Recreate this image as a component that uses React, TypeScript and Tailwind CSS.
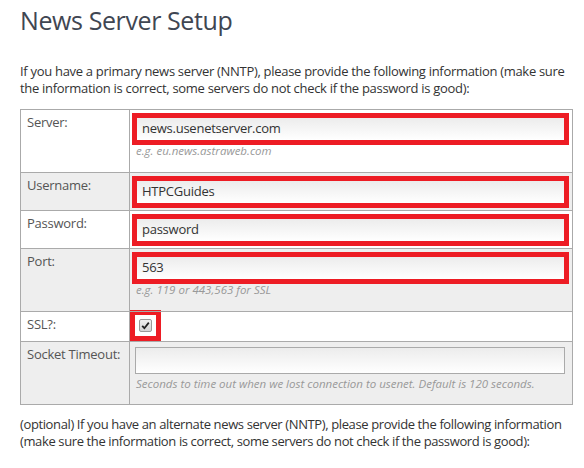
import React from 'react';

const font = { fontFamily: '"Open Sans", "Noto Sans", sans-serif' };

function RedInput({ value }: { value: string }) {
  return (
    <div className="-ml-[3px] w-[437px] h-[32px] border-[5px] border-[#ed1c24] bg-gradient-to-b from-[#ececec] to-white flex items-center pl-[5px] text-[13px] tracking-[-0.25px] text-[#333]">
      {value}
    </div>
  );
}

function Hint({ children, tight }: { children: React.ReactNode; tight?: boolean }) {
  return (
    <div className={`italic text-[11.5px] leading-[14px] text-[#999] pl-[1px] whitespace-nowrap ${tight ? '-mt-[1px]' : 'mt-[3px]'}`}>
      {children}
    </div>
  );
}

function Label({ children }: { children: React.ReactNode }) {
  return (
    <td className="border border-[#aaaaaa] align-top px-[6px] pt-[4px] text-[13px] leading-[17px] tracking-[-0.25px] text-[#555] whitespace-nowrap">
      {children}
    </td>
  );
}

function Row({ label, shade, h, children }: { label: string; shade?: boolean; h: string; children: React.ReactNode }) {
  return (
    <tr className={`${h} ${shade ? 'bg-[#eeeeee]' : 'bg-white'}`}>
      <Label>{label}</Label>
      <td className="border border-[#aaaaaa] align-top px-[5px] pt-[3px]">{children}</td>
    </tr>
  );
}

export default function App() {
  return (
    <div className="w-[584px] h-[468px] overflow-hidden bg-white px-5" style={font}>
      <h1 className="text-[25px] leading-[32px] tracking-[-0.4px] text-[#3f4652] pt-[4px]">News Server Setup</h1>
      <p className="mt-[27px] text-[13px] leading-[17px] tracking-[-0.3px] text-[#333] w-[553px]">
        If you have a primary news server (NNTP), please provide the following information (make sure the information is correct, some servers do not check if the password is good):
      </p>
      <table className="mt-[12px] w-[553px] table-fixed border-collapse border border-[#aaaaaa]">
        <colgroup>
          <col className="w-[109px]" />
          <col />
        </colgroup>
        <tbody>
          <Row label="Server:" h="h-[63px]">
            <RedInput value="news.usenetserver.com" />
            <Hint tight>e.g. eu.news.astraweb.com</Hint>
          </Row>
          <Row label="Username:" shade h="h-[38px]">
            <RedInput value="HTPCGuides" />
          </Row>
          <Row label="Password:" h="h-[38px]">
            <RedInput value="password" />
          </Row>
          <Row label="Port:" shade h="h-[63px]">
            <RedInput value="563" />
            <Hint tight>e.g. 119 or 443,563 for SSL</Hint>
          </Row>
          <tr className="h-[30px] bg-white">
            <Label>SSL?:</Label>
            <td className="border border-[#aaaaaa] align-top p-0">
              <div className="w-[31px] h-[31px] -mt-[2px] border-[5px] border-[#ed1c24] flex items-center justify-center bg-white">
                <div className="w-[13px] h-[13px] rounded-[2px] border border-[#9a9a9a] bg-gradient-to-b from-[#f0f0f0] to-[#d4d4d4] flex items-center justify-center">
                  <svg width="9" height="9" viewBox="0 0 9 9">
                    <path d="M1.2 4.8 L3.4 7.2 L7.8 1.6" stroke="#222" strokeWidth="1.8" fill="none" />
                  </svg>
                </div>
              </div>
            </td>
          </tr>
          <Row label="Socket Timeout:" shade h="h-[63px]">
            <div className="w-[430px] h-[27px] mt-[2px] border border-[#aaaaaa] bg-gradient-to-b from-[#ececec] to-white" />
            <Hint>Seconds to time out when we lost connection to usenet. Default is 120 seconds.</Hint>
          </Row>
        </tbody>
      </table>
      <p className="mt-[11px] text-[13px] leading-[17px] tracking-[-0.38px] text-[#333] w-[555px]">
        (optional) If you have an alternate news server (NNTP), please provide the following information (make sure the information is correct, some servers do not check if the password is good):
      </p>
    </div>
  );
}
